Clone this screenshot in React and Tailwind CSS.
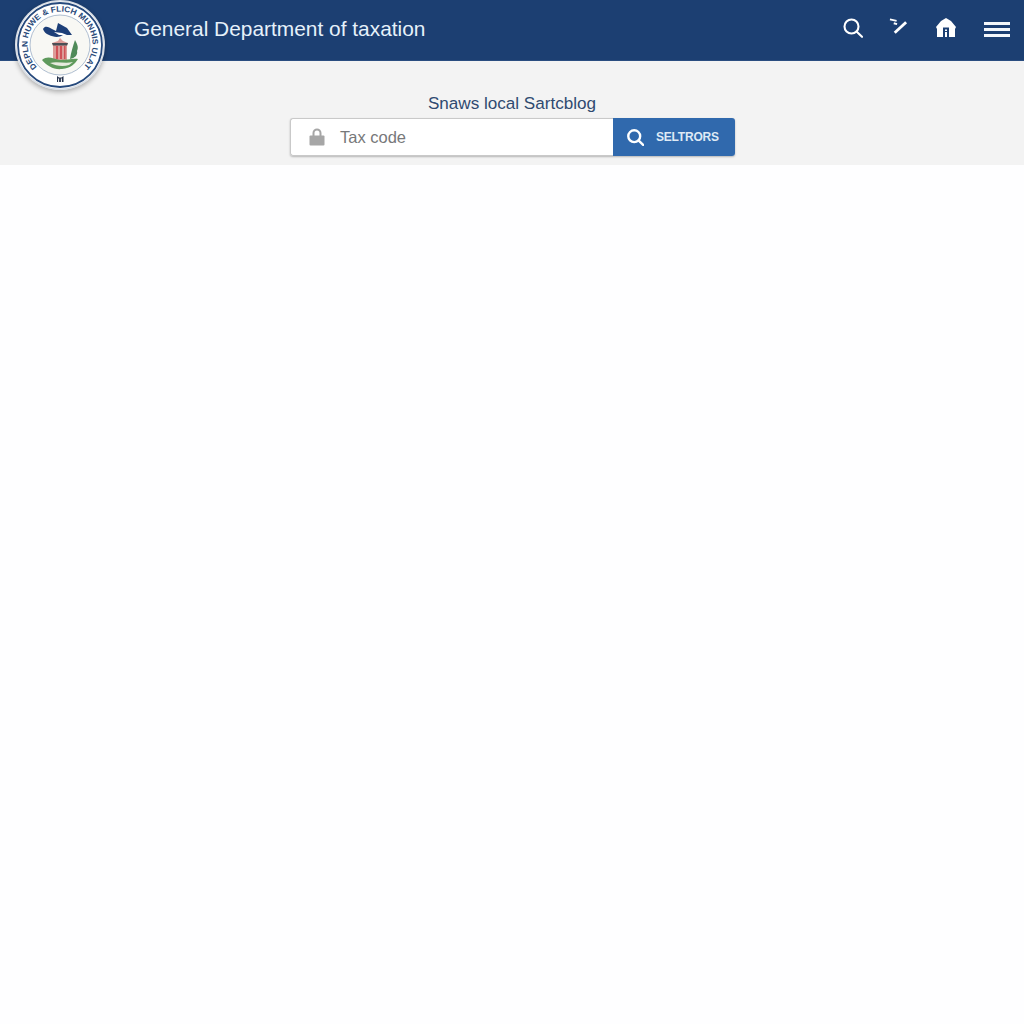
const Seal = () => (
  <svg viewBox="0 0 90 90" className="w-[90px] h-[90px]">
    <defs>
      <path id="ring" d="M22 67 A32.500 32.500 0 1 1 68 67" />
    </defs>
    <circle cx="45" cy="45" r="45" fill="#d9dee5" />
    <circle cx="45" cy="45" r="43.500" fill="#ffffff" />
    <circle cx="45" cy="45" r="42" fill="none" stroke="#26497c" strokeWidth="1.800" />
    <circle cx="45" cy="45" r="30" fill="#f8f8f4" stroke="#8ea3bf" strokeWidth="0.700" />
    <text fontSize="8" fill="#2a4a7a" fontFamily="Liberation Sans, sans-serif" fontWeight="700">
      <textPath href="#ring" startOffset="0" textLength="152" lengthAdjust="spacingAndGlyphs">DEPLN HUWE &amp; FLICH MUNHIS ULAT</textPath>
    </text>
    <path d="M28 29 C30 25 34 27 37 29 L41 31 L43 23 L52 28 L57 35 L48 35 C44 38 38 37 34 35 C31 34 29 32 28 29Z" fill="#1d3f78" />
    <path d="M39 32 L47 33 L52 35 L44 35Z" fill="#ffffff" />
    <path d="M37 43 L43 41 L45 38 L48 41 L53 43 L52 46 L52 60 L38 60 L38 46Z" fill="#dc9c98" />
    <path d="M41 46 h2 v13 h-2z M45 46 h2 v13 h-2z M49 46 h1.500 v13 h-1.500z" fill="#cf5257" />
    <path d="M37 43 L53 43 L52 45.500 L38 45.500Z" fill="#4a4f55" />
    <path d="M55 59 C56 52 58 46 60 40 C62 44 64 47 62 51 C63 55 60 58 55 59Z" fill="#4f8a58" />
    <path d="M27 60 C33 55 38 59 45 60 C52 60 58 58 63 59 C60 64 56 68 47 69 C39 70 32 66 27 60Z" fill="#5f9a5c" />
    <path d="M35 63 C42 61 50 64 58 62 L54 65 C48 67 41 66 35 63Z" fill="#e8ebdf" />
    <path d="M42 82 v-6 l2 1.500 h2.500 l2 -1.500 v6 h-1.600 v-3.500 h-1 v3.500 h-1.800 v-3.500 h-1 v3.500z" fill="#27344d" />
  </svg>
);

const Search = ({ className, width = "2.100" }) => (
  <svg viewBox="0 0 20 20" fill="none" stroke="currentColor" strokeWidth={width} strokeLinecap="round" className={className}>
    <circle cx="8.500" cy="8.500" r="7" />
    <path d="M13.500 13.500L19 18.800" />
  </svg>
);

export default function App() {
  return (
    <div className="relative min-h-[1024px] bg-[#fefeff] font-['Liberation_Sans',sans-serif]">
      <header className="h-[61px] bg-[#1c3f72] flex items-center pl-[134px] pr-[14px] border-b border-[#2a4d80]">
        <h1 className="text-[20.900px] text-[#e6f1fa] font-normal leading-none mb-[1px]">General Department of taxation</h1>
        <div className="ml-auto flex items-center text-white">
          <Search className="w-[20px] h-[20px] mb-[4px]" />
          <svg viewBox="0 0 20 20" className="w-[19px] h-[19px] ml-[26px] mb-[5px]" fill="none" stroke="currentColor">
            <path d="M6 15.500L18 4.500" strokeWidth="3" />
            <path d="M1 1.500L8 3M5 5.500L8.500 6.500" strokeWidth="2" />
          </svg>
          <svg viewBox="0 0 20 19" className="w-[20px] h-[19px] ml-[28px] mb-[6px]">
            <path d="M10 0L15 3L20 9L19 11V19H1V11L0 9L5 3Z" fill="#ffffff" />
            <path d="M7 9.500H13V19H7Z" fill="#1c3f72" />
            <path d="M9 11.500H11V13H9ZM9 14H11V19H9Z" fill="#ffffff" />
          </svg>
          <div className="ml-[28px] w-[26px] flex flex-col gap-[3px] mt-[-1px]">
            <div className="h-[3px] bg-[#f3f7fb]" />
            <div className="h-[3px] bg-[#f3f7fb]" />
            <div className="h-[3px] bg-[#f3f7fb]" />
          </div>
        </div>
      </header>

      <div className="absolute left-[15px] top-0 rounded-full shadow-[0_2px_5px_rgba(0,0,0,0.3)]">
        <Seal />
      </div>

      <section className="h-[104px] bg-[#f3f3f3] flex flex-col items-center pt-[33px]">
        <p className="text-[17.100px] leading-[20px] text-[#2f4a70]">Snaws local Sartcblog</p>
        <div className="mt-[4px] w-[445px] h-[38px] ml-[1px] flex rounded-[3px] shadow-[0_1px_2px_rgba(0,0,0,0.25)]">
          <div className="flex-1 flex items-center bg-white border border-[#c9c9c9] border-r-0 rounded-l-[3px] pl-[18px]">
            <svg viewBox="0 0 16 18" className="w-[16px] h-[18px] text-[#a6a6a6]" fill="none" stroke="currentColor">
              <path d="M4.500 8V5a3.500 3.500 0 0 1 7 0V8" strokeWidth="2" />
              <rect x="0.500" y="7.500" width="15" height="10" rx="1" fill="currentColor" strokeWidth="0" />
            </svg>
            <span className="ml-[15px] text-[16.500px] text-[#77787a]">Tax code</span>
          </div>
          <div className="w-[122px] flex items-center bg-[#3069ad] rounded-r-[3px] pl-[14px] text-white">
            <Search className="w-[17px] h-[17px]" width="2.800" />
            <span className="ml-[12px] text-[12px] tracking-[-0.2px] font-bold text-[#dfeaf5]">SELTRORS</span>
          </div>
        </div>
      </section>
    </div>
  );
}
